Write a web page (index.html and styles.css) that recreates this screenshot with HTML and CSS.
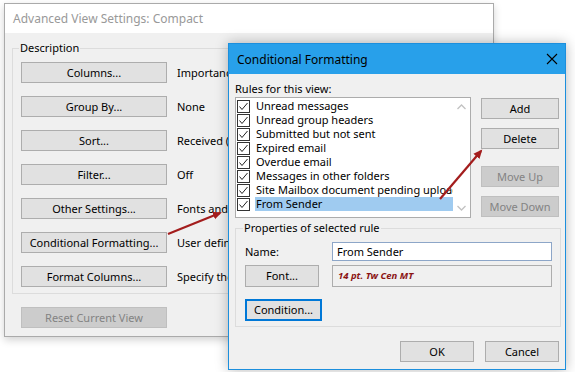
FILE: index.html
```html
<!DOCTYPE html>
<html lang="en">
<head>
  <meta charset="UTF-8">
  <title>Conditional Formatting</title>
  <link rel="stylesheet" href="styles.css">
</head>
<body>
  <div class="desk">
    <!-- the dialog behind -->
    <section class="win back">
      <header class="back-title">Advanced View Settings: Compact</header>
      <div class="back-body">
        <fieldset class="group desc">
          <legend>Description</legend>
          <div class="row"><button class="btn wide">Columns...</button><span class="info">Importance, Icon, Flag Status, From, Subject</span></div>
          <div class="row"><button class="btn wide">Group By...</button><span class="info">None</span></div>
          <div class="row"><button class="btn wide">Sort...</button><span class="info">Received (Descending)</span></div>
          <div class="row"><button class="btn wide">Filter...</button><span class="info">Off</span></div>
          <div class="row"><button class="btn wide">Other Settings...</button><span class="info">Fonts and other Table View settings</span></div>
          <div class="row"><button class="btn wide">Conditional Formatting...</button><span class="info">User defined fonts on each message</span></div>
          <div class="row"><button class="btn wide">Format Columns...</button><span class="info">Specify the display formats for each field</span></div>
        </fieldset>
        <button class="btn wide disabled">Reset Current View</button>
      </div>
    </section>

    <!-- the dialog in front -->
    <section class="win front">
      <header class="front-title">
        <span>Conditional Formatting</span>
        <svg class="close" width="12" height="12" viewBox="0 0 12 12">
          <path d="M1 1 L11 11 M11 1 L1 11" stroke="#000" stroke-width="1.1" fill="none"/>
        </svg>
      </header>
      <div class="front-body">
        <div class="rules-label">Rules for this view:</div>
        <div class="rules">
          <div class="list">
            <ul class="items">
              <li><span class="check"></span><span class="text">Unread messages</span></li>
              <li><span class="check"></span><span class="text">Unread group headers</span></li>
              <li><span class="check"></span><span class="text">Submitted but not sent</span></li>
              <li><span class="check"></span><span class="text">Expired email</span></li>
              <li><span class="check"></span><span class="text">Overdue email</span></li>
              <li><span class="check"></span><span class="text">Messages in other folders</span></li>
              <li><span class="check"></span><span class="text">Site Mailbox document pending upload</span></li>
              <li class="selected"><span class="check"></span><span class="text">From Sender</span></li>
            </ul>
            <div class="scroll">
              <svg width="9" height="6" viewBox="0 0 9 6"><path d="M0.5 5 L4.5 1 L8.5 5" stroke="#c2c2c2" stroke-width="1.3" fill="none"/></svg>
              <svg width="9" height="6" viewBox="0 0 9 6"><path d="M0.5 1 L4.5 5 L8.5 1" stroke="#c2c2c2" stroke-width="1.3" fill="none"/></svg>
            </div>
          </div>
          <div class="side">
            <button class="btn">Add</button>
            <button class="btn">Delete</button>
            <button class="btn disabled gap">Move Up</button>
            <button class="btn disabled">Move Down</button>
          </div>
        </div>

        <fieldset class="group props">
          <legend>Properties of selected rule</legend>
          <div class="prop-row">
            <label class="prop-label" for="ruleName">Name:</label>
            <input id="ruleName" class="name-input" type="text" value="From Sender">
          </div>
          <div class="prop-row">
            <button class="btn font-btn">Font...</button>
            <div class="sample">14 pt. Tw Cen MT</div>
          </div>
          <button class="btn cond-btn">Condition...</button>
        </fieldset>

        <div class="footer">
          <button class="btn">OK</button>
          <button class="btn">Cancel</button>
        </div>
      </div>
    </section>

    <!-- red pointer arrows -->
    <svg class="arrows" width="575" height="372" viewBox="0 0 575 372">
      <defs>
        <marker id="head" markerWidth="10" markerHeight="10" refX="7" refY="5" orient="auto" markerUnits="userSpaceOnUse">
          <path d="M0 1 L9 5 L0 9 Z" fill="#a31d1d"/>
        </marker>
      </defs>
      <line x1="168" y1="234" x2="220" y2="213" stroke="#a31d1d" stroke-width="2.2" marker-end="url(#head)"/>
      <line x1="440" y1="199" x2="481" y2="151" stroke="#a31d1d" stroke-width="2.2" marker-end="url(#head)"/>
    </svg>
  </div>
</body>
</html>
```

FILE: styles.css
```css
body {
  margin: 0;
  background-color: #ffffff;
  font-family: 'Noto Sans', 'Open Sans', sans-serif;
  font-size: 11px;
  color: #000;
}

.desk {
  position: relative;
  width: 575px;
  height: 372px;
  overflow: hidden;
}

.win {
  position: absolute;
  box-sizing: border-box;
  background-color: #f0f0f0;
}

button {
  font-family: inherit;
  font-size: inherit;
}

.btn {
  box-sizing: border-box;
  height: 21px;
  padding: 0;
  background-color: #e1e1e1;
  border: 1px solid #adadad;
  color: #000;
  line-height: 18px;
}

.btn.disabled {
  background-color: #cccccc;
  border-color: #bfbfbf;
  color: #838383;
}

.group {
  margin: 0;
  border: 1px solid #dcdcdc;
  min-width: 0;
}

.group legend {
  padding: 0 1px;
  margin-left: -2px;
  line-height: 14px;
}

/* back dialog */
.back {
  left: 4px;
  top: 3px;
  width: 490px;
  height: 334px;
  border: 1px solid #aaaaaa;
  box-shadow: 0 3px 8px rgba(0, 0, 0, 0.18);
}

.back-title {
  height: 29px;
  background-color: #fff;
  color: #999999;
  font-size: 12px;
  line-height: 29px;
  padding-left: 8px;
}

.back-body {
  padding: 8px 0 0 7px;
}

.desc {
  padding: 7px 0 6px 8px;
  display: flex;
  flex-direction: column;
  gap: 13px;
}

.row {
  display: flex;
  align-items: center;
  gap: 10px;
  white-space: nowrap;
}

.wide {
  width: 146px;
  flex: none;
}

.back-body > .btn {
  margin: 13px 0 0 9px;
}

/* front dialog */
.front {
  left: 228px;
  top: 43px;
  width: 338px;
  height: 327px;
  border: 1px solid #1c8fdd;
  box-shadow: 0 0 12px rgba(0, 0, 0, 0.28);
}

.front-title {
  height: 30px;
  background-color: #28a0ea;
  display: flex;
  align-items: center;
  justify-content: space-between;
  padding: 0 7px 0 8px;
  font-size: 12px;
}

.front-body {
  padding: 8px 6px 0 6px;
}

.rules-label {
  line-height: 14px;
  margin-bottom: 1px;
}

.rules {
  display: flex;
  gap: 10px;
}

.list {
  box-sizing: border-box;
  width: 236px;
  height: 121px;
  background-color: #fff;
  border: 1px solid #acacac;
  display: flex;
}

.items {
  list-style: none;
  margin: 0;
  padding: 1px 0 0 1px;
  flex: 1;
  overflow: hidden;
}

.items li {
  display: flex;
  align-items: center;
  height: 14px;
  white-space: nowrap;
}

.check {
  box-sizing: border-box;
  flex: none;
  width: 13px;
  height: 13px;
  border: 1px solid #333;
  margin-right: 5px;
  background: #fff url("data:image/svg+xml,%3Csvg xmlns='http://www.w3.org/2000/svg' width='11' height='11'%3E%3Cpath d='M1.5 5.5 L4 8.5 L9.5 2' stroke='%23222' stroke-width='1' fill='none'/%3E%3C/svg%3E") no-repeat center;
}

.text {
  overflow: hidden;
  flex: 1;
  line-height: 14px;
  padding-left: 1px;
}

.selected .text {
  background-color: #9fcbf0;
}

.scroll {
  width: 17px;
  flex: none;
  display: flex;
  flex-direction: column;
  justify-content: space-between;
  align-items: center;
  padding: 6px 0 6px;
}

.side {
  display: flex;
  flex-direction: column;
  width: 78px;
  padding-top: 1px;
  gap: 9px;
}

.side .btn {
  width: 78px;
}

.side .gap {
  margin-top: 8px;
}

.props {
  margin-top: 3px;
  padding: 7px 0 5px 9px;
  width: 326px;
  box-sizing: border-box;
}

.prop-row {
  display: flex;
  align-items: center;
  margin-bottom: 4px;
}

.prop-label {
  width: 87px;
}

.name-input {
  box-sizing: border-box;
  width: 220px;
  height: 19px;
  border: 1px solid #8da6c8;
  font-family: inherit;
  font-size: inherit;
  padding: 0 4px;
}

.font-btn {
  width: 74px;
  height: 22px;
  margin-right: 13px;
}

.sample {
  box-sizing: border-box;
  width: 220px;
  height: 22px;
  border: 1px solid #adadad;
  color: #8b1414;
  font-weight: bold;
  font-style: italic;
  font-size: 9.5px;
  line-height: 20px;
  padding-left: 5px;
}

.cond-btn {
  margin-top: 8px;
  width: 77px;
  height: 22px;
  border: 2px solid #0078d7;
}

.footer {
  display: flex;
  justify-content: flex-end;
  gap: 11px;
  margin-top: 14px;
}

.footer .btn {
  width: 74px;
}

.arrows {
  position: absolute;
  left: 0;
  top: 0;
}
```
